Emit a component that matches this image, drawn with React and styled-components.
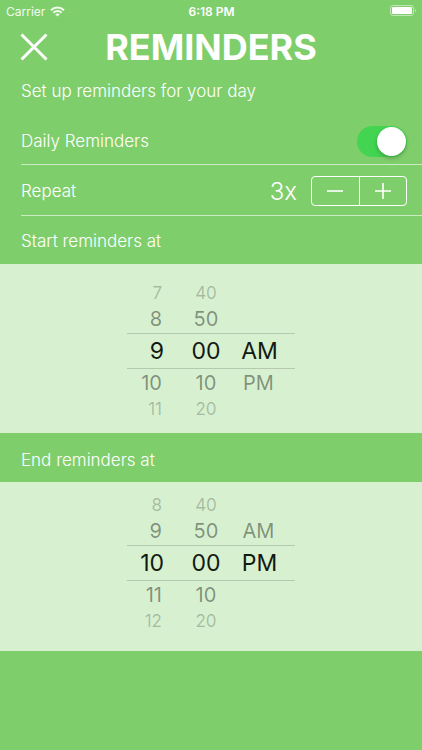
import React, { useState } from 'react';
import styled, { createGlobalStyle } from 'styled-components';

const GlobalStyle = createGlobalStyle`
  * {
    box-sizing: border-box;
  }

  body {
    margin: 0;
    background-color: #7fce6c;
    font-family: Inter, "Liberation Sans", sans-serif;
    color: white;
  }

  button {
    font-family: inherit;
    color: inherit;
    background: none;
    border: none;
    padding: 0;
    cursor: pointer;
  }
`;

const StatusBar = styled.div`
  display: grid;
  grid-template-columns: 1fr auto 1fr;
  align-items: center;
  height: 22px;
  padding: 0 5px 0 6px;
  font-size: 12px;
`;

const Carrier = styled.div`
  display: flex;
  align-items: center;
  gap: 5px;
  opacity: 0.9;
`;

const Clock = styled.span`
  font-weight: 600;
`;

const BatteryIcon = styled.svg`
  justify-self: end;
`;

const Header = styled.header`
  display: grid;
  grid-template-columns: 28px 1fr 28px;
  align-items: center;
  height: 50px;
  padding: 0 20px;
`;

const CloseButton = styled.button`
  display: flex;
  width: 28px;
  height: 28px;
`;

const Title = styled.h1`
  margin: 0;
  text-align: center;
  font-size: 36px;
  line-height: 40px;
  font-weight: 700;
`;

const Subtitle = styled.p`
  margin: 0;
  padding: 0 21px;
  font-size: 17px;
  line-height: 38px;
  font-weight: 300;
`;

const Row = styled.div`
  display: flex;
  align-items: center;
  justify-content: space-between;
  height: ${(props) => (props.$tall ? '55px' : '51px')};
  margin-left: 21px;
  padding-right: 15px;
  padding-top: ${(props) => (props.$tall ? '8px' : '2px')};
  border-bottom: 1px solid rgba(255, 255, 255, 0.6);
`;

const RowLabel = styled.label`
  font-size: 17px;
  font-weight: 300;
`;

const Switch = styled.input`
  appearance: none;
  width: 50px;
  height: 31px;
  margin: 0;
  padding: 1px;
  border-radius: 16px;
  background-color: ${(props) => (props.checked ? '#43d551' : 'rgba(255, 255, 255, 0.4)')};
  cursor: pointer;

  &::before {
    content: '';
    display: block;
    width: 29px;
    height: 29px;
    margin-left: ${(props) => (props.checked ? '19px' : '0')};
    border-radius: 50%;
    background-color: white;
    box-shadow: 0 2px 4px rgba(0, 0, 0, 0.25);
    transition: margin-left 0.2s;
  }
`;

const RepeatControls = styled.div`
  display: flex;
  align-items: center;
  gap: 14px;
`;

const Count = styled.output`
  font-size: 24px;
  font-weight: 300;
`;

const Stepper = styled.div`
  display: flex;
  width: 96px;
  height: 30px;
  border: 1px solid white;
  border-radius: 4px;
`;

const StepButton = styled.button`
  display: flex;
  flex: 1;
  align-items: center;
  justify-content: center;

  & + & {
    border-left: 1px solid white;
  }
`;

const SectionTitle = styled.h2`
  display: flex;
  align-items: center;
  height: ${(props) => (props.$low ? '49px' : '48px')};
  margin: 0;
  padding: ${(props) => (props.$low ? '5px' : '1px')} 21px 0;
  font-size: 17px;
  font-weight: 300;
`;

const PickerPanel = styled.div`
  display: flex;
  justify-content: center;
  padding: ${(props) => props.$padding};
  background-color: #d7f0d0;
`;

const Wheels = styled.div`
  display: grid;
  grid-template-columns: 49px 60px 59px;
`;

const WheelColumn = styled.div`
  display: flex;
  flex-direction: column;
`;

// all indexed by the distance from the selected row
const rowHeights = ['36px', '28px', '24px'];
const rowFonts = ['23px', '20px', '17px'];
const rowInsets = ['12px', '14px', '14px'];
const rowColors = ['#111a10', 'rgba(17, 26, 16, 0.45)', 'rgba(17, 26, 16, 0.25)'];

const WheelItem = styled.button`
  height: ${(props) => rowHeights[props.$distance]};
  padding-right: ${(props) => (props.$align === 'center' ? '0' : rowInsets[props.$distance])};
  text-align: ${(props) => (props.$align === 'right' ? 'right' : 'center')};
  font-size: ${(props) => rowFonts[props.$distance]};
  color: ${(props) => rowColors[props.$distance]};
  border: 0 solid #b4c9ae;
  border-width: ${(props) => (props.$distance === 0 ? '1px 0' : '0')};
  white-space: nowrap;
`;

const HOURS = ['1', '2', '3', '4', '5', '6', '7', '8', '9', '10', '11', '12'];
const MINUTES = ['00', '10', '20', '30', '40', '50'];
const MERIDIEM = ['AM', 'PM'];

function Wheel({ label, values, start, align, wrap }) {
  const [selected, setSelected] = useState(values.indexOf(start));

  return (
    <WheelColumn role="group" aria-label={label}>
      {[-2, -1, 0, 1, 2].map((offset) => {
        let index = selected + offset;
        if (wrap) {
          index = (index + values.length) % values.length;
        }
        return (
          <WheelItem
            key={offset}
            type="button"
            $distance={Math.abs(offset)}
            $align={align}
            disabled={values[index] === undefined}
            onClick={() => setSelected(index)}
          >
            {values[index]}
          </WheelItem>
        );
      })}
    </WheelColumn>
  );
}

function TimePicker({ hour, minute, meridiem, padding }) {
  return (
    <PickerPanel $padding={padding}>
      <Wheels>
        <Wheel label="Hour" values={HOURS} start={hour} align="right" wrap />
        <Wheel label="Minute" values={MINUTES} start={minute} align="center" wrap />
        <Wheel label="AM or PM" values={MERIDIEM} start={meridiem} align="inset" />
      </Wheels>
    </PickerPanel>
  );
}

function App() {
  const [daily, setDaily] = useState(true);
  const [repeat, setRepeat] = useState(3);

  return (
    <main>
      <GlobalStyle />
      <StatusBar>
        <Carrier>
          <span>Carrier</span>
          <svg width="15" height="11" viewBox="0 0 15 11" fill="none" stroke="white" strokeWidth="2">
            <path d="M1 4.2C4.6 0.6 10.4 0.6 14 4.2" />
            <path d="M3.4 6.7C5.7 4.4 9.3 4.4 11.6 6.7" />
            <path d="M7.5 10.6L5.2 8.3C6.5 7.1 8.5 7.1 9.8 8.3Z" fill="white" stroke="none" />
          </svg>
        </Carrier>
        <Clock>6:18 PM</Clock>
        <BatteryIcon width="27" height="12" viewBox="0 0 27 12">
          <rect x="0.5" y="0.5" width="23" height="10" rx="2.5" fill="none" stroke="white" strokeOpacity="0.5" />
          <rect x="2" y="2" width="20" height="7" rx="1" fill="white" />
          <path d="M25 3.8C26.4 4.2 26.4 6.8 25 7.2Z" fill="white" fillOpacity="0.5" />
        </BatteryIcon>
      </StatusBar>
      <Header>
        <CloseButton type="button" aria-label="Close">
          <svg width="28" height="28" viewBox="0 0 28 28" stroke="white" strokeWidth="3">
            <path d="M1.5 1.5L26.5 26.5M26.5 1.5L1.5 26.5" />
          </svg>
        </CloseButton>
        <Title>REMINDERS</Title>
      </Header>
      <Subtitle>Set up reminders for your day</Subtitle>
      <Row $tall>
        <RowLabel htmlFor="daily">Daily Reminders</RowLabel>
        <Switch
          id="daily"
          type="checkbox"
          role="switch"
          checked={daily}
          onChange={() => setDaily(!daily)}
        />
      </Row>
      <Row>
        <RowLabel htmlFor="repeat">Repeat</RowLabel>
        <RepeatControls>
          <Count id="repeat">{`${repeat}x`}</Count>
          <Stepper>
            <StepButton type="button" aria-label="Less" onClick={() => setRepeat(Math.max(1, repeat - 1))}>
              <svg width="16" height="16" viewBox="0 0 16 16" stroke="white" strokeWidth="1.6">
                <path d="M0 8H16" />
              </svg>
            </StepButton>
            <StepButton type="button" aria-label="More" onClick={() => setRepeat(repeat + 1)}>
              <svg width="16" height="16" viewBox="0 0 16 16" stroke="white" strokeWidth="1.6">
                <path d="M0 8H16M8 0V16" />
              </svg>
            </StepButton>
          </Stepper>
        </RepeatControls>
      </Row>
      <SectionTitle>Start reminders at</SectionTitle>
      <TimePicker hour="9" minute="00" meridiem="AM" padding="17px 0 12px" />
      <SectionTitle $low>End reminders at</SectionTitle>
      <TimePicker hour="10" minute="00" meridiem="PM" padding="11px 0 18px" />
    </main>
  );
}

export default App;
